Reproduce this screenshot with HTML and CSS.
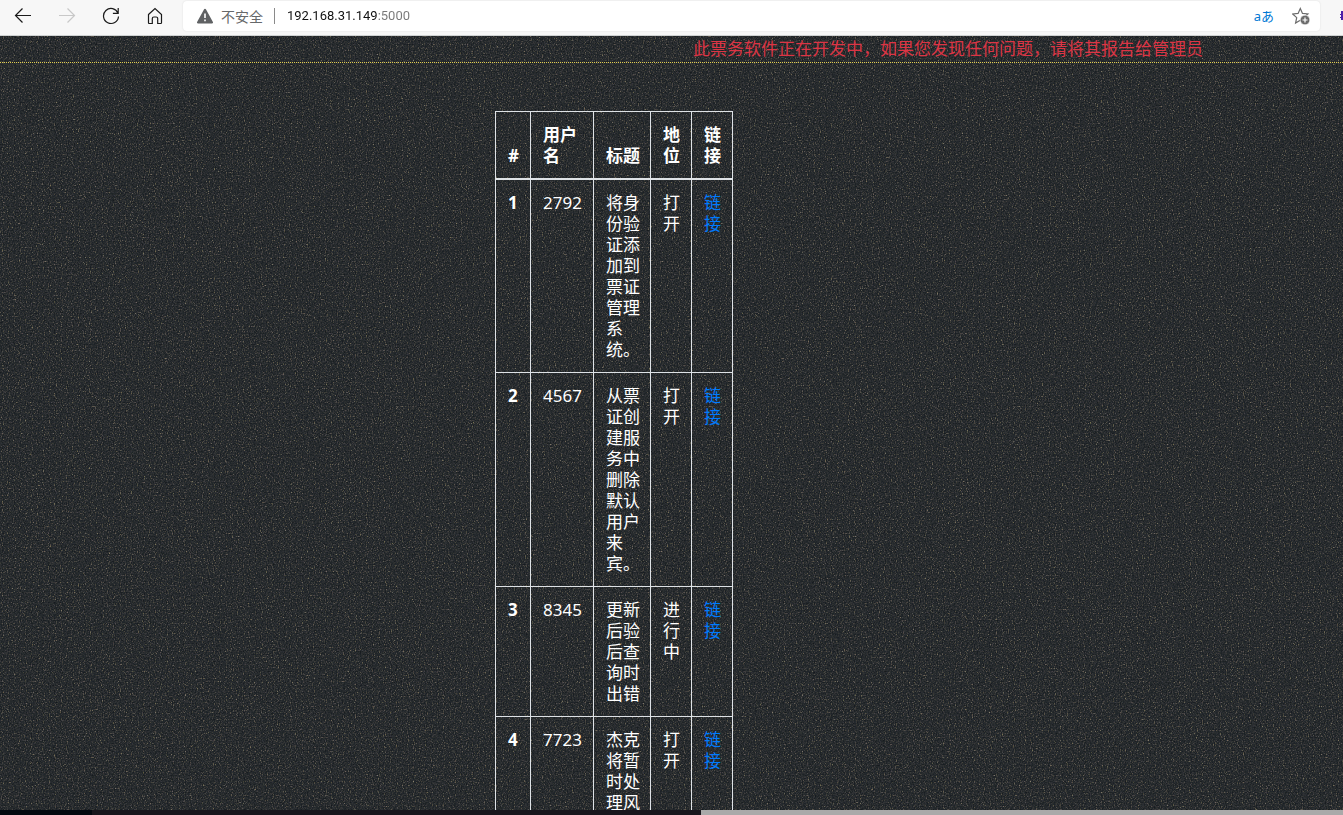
FILE: index.html
```html
<!DOCTYPE html>
<html lang="zh-CN">
<head>
<meta charset="utf-8">
<title>票务</title>
<link rel="stylesheet" href="styles.css">
</head>
<body>
<header class="toolbar">
  <nav class="nav">
    <button class="icon-btn" aria-label="后退"><svg viewBox="0 0 18 18"><path d="M17 8.5H1.5M8.5 1.5l-7 7 7 7"/></svg></button>
    <button class="icon-btn disabled" aria-label="前进" disabled><svg viewBox="0 0 18 18"><path d="M1 8.5h15.500M9.500 1.500l7 7-7 7"/></svg></button>
    <button class="icon-btn" aria-label="刷新"><svg viewBox="0 0 18 18"><path d="M16 6.200A7.500 7.500 0 1 0 16.500 9.500M16.200 1v5.300h-5.300"/></svg></button>
    <button class="icon-btn" aria-label="主页"><svg viewBox="0 0 18 18"><path d="M2.500 7.500L9 1.500l6.500 6v8.200a.8.8 0 0 1-.8.8h-3v-5a1.500 1.500 0 0 0-1.500-1.500H7.800a1.500 1.500 0 0 0-1.500 1.500v5h-3a.8.8 0 0 1-.8-.8z"/></svg></button>
  </nav>
  <form class="address">
    <svg class="warn" viewBox="0 0 16 16"><path d="M8 .8a1 1 0 0 1 .9.500l7 12.700a1 1 0 0 1-.9 1.500H1a1 1 0 0 1-.9-1.500l7-12.700A1 1 0 0 1 8 .8z" fill="#5f6163"/><path d="M8 5.500v4.500M8 11.500v1.700" stroke="#fff" stroke-width="1.600"/></svg>
    <label class="security" for="url">不安全</label>
    <span class="divider"></span>
    <input class="url" id="url" type="text" value="192.168.31.149:5000" spellcheck="false">
    <button type="button" class="translate" aria-label="翻译">aあ</button>
    <button type="button" class="icon-btn star" aria-label="收藏"><svg viewBox="0 0 18 18"><path d="M8.300 1.500l2.200 4.900 5.400.6-4 3.600 1.100 5.300-4.700-2.600-4.700 2.700 1.100-5.400-4-3.600 5.400-.6z"/><circle cx="13" cy="13" r="4.800" fill="#6b6b6b" stroke="#fff" stroke-width=".6"/><path d="M13 10.500v5M10.500 13h5" stroke="#fff"/></svg></button>
  </form>
  <svg class="extension" viewBox="0 0 4 12"><path d="M4 1v9H2V8H1V7h1V5H1V4h1V1z" fill="#4b1fa8"/></svg>
</header>
<main class="page">
  <svg class="texture" aria-hidden="true">
    <filter id="grain" x="0" y="0" width="100%" height="100%" color-interpolation-filters="sRGB">
      <feTurbulence type="fractalNoise" baseFrequency=".83 .71" numOctaves="2" seed="4"/>
      <feColorMatrix values=".9 .1 0 0 0  .85 .15 0 0 0  .75 .1 .15 0 0  0 0 0 0 1"/>
      <feComponentTransfer>
        <feFuncR type="table" tableValues=".07 .07 .09 .105 .125 .155 .2 .31 .46 .55 .6"/>
        <feFuncG type="table" tableValues=".08 .08 .1 .12 .145 .17 .21 .31 .45 .53 .57"/>
        <feFuncB type="table" tableValues=".09 .09 .11 .13 .155 .18 .22 .3 .41 .48 .5"/>
      </feComponentTransfer>
    </filter>
    <rect width="100%" height="100%" filter="url(#grain)"/>
  </svg>
  <p class="notice">此票务软件正在开发中，如果您发现任何问题，请将其报告给管理员</p>
  <table class="tickets">
    <colgroup><col class="c-id"><col class="c-user"><col class="c-title"><col class="c-small"><col class="c-small"></colgroup>
    <thead>
      <tr><th>#</th><th>用户名</th><th>标题</th><th>地位</th><th>链接</th></tr>
    </thead>
    <tbody>
      <tr><th>1</th><td>2792</td><td>将身份验证添加到票证管理系统。</td><td>打开</td><td><a href="#1">链接</a></td></tr>
      <tr><th>2</th><td>4567</td><td>从票证创建服务中删除默认用户来宾。</td><td>打开</td><td><a href="#2">链接</a></td></tr>
      <tr><th>3</th><td>8345</td><td>更新后验后查询时出错</td><td>进行中</td><td><a href="#3">链接</a></td></tr>
      <tr><th>4</th><td>7723</td><td>杰克将暂时处理风</td><td>打开</td><td><a href="#4">链接</a></td></tr>
    </tbody>
  </table>
</main>
<footer class="strip"><span class="strip-start"></span><span class="strip-mid"></span><span class="strip-end"></span></footer>
</body>
</html>
```
FILE: styles.css
```css
* { box-sizing: border-box; }
body {
  margin: 0;
  height: 100vh;
  display: flex;
  flex-direction: column;
  overflow: hidden;
  background: #25292b;
  color: #fff;
  font: 17px/21px "Noto Sans", "Noto Sans CJK SC", sans-serif;
}
button { border: 0; padding: 0; background: none; }

.toolbar {
  flex: none;
  display: flex;
  align-items: flex-start;
  height: 36px;
  padding-top: 1px;
  background: #f7f7f7;
  border-bottom: 1px solid #cfd2d2;
}
.nav {
  display: flex;
  gap: 26px;
  width: 183px;
  padding: 6px 0 0 14px;
}
.icon-btn { width: 18px; height: 18px; flex: none; }
.icon-btn svg {
  display: block;
  width: 18px;
  height: 18px;
  fill: none;
  stroke: #1a1a1a;
  stroke-width: 1.2;
}
.disabled svg { stroke: #c8c8c8; }
.address {
  flex: 1;
  display: flex;
  align-items: center;
  height: 30px;
  padding: 0 10px 0 14px;
  background: #fff;
  border-radius: 4px;
  box-shadow: 0 0 2px #dcdcdc;
}
.warn { width: 16px; height: 16px; margin-right: 8px; }
.security { font-size: 14px; color: #66686a; }
.divider { width: 1px; height: 16px; margin: 0 12px 0 11px; background: #8a8a8a; }
.url {
  flex: 1;
  min-width: 0;
  padding: 0;
  border: 0;
  outline: 0;
  font: 13px/20px Roboto, "Noto Sans", sans-serif;
  color: #1a1a1a;
  -webkit-text-fill-color: transparent;
  background: linear-gradient(90deg, #111 91px, #777 91px);
  -webkit-background-clip: text;
  background-clip: text;
}
.translate {
  margin-right: 18px;
  color: #0078d4;
  font: 13px/18px "Noto Sans", "Noto Sans CJK JP", sans-serif;
}
.star svg { stroke: #6b6b6b; }
.extension { width: 4px; height: 12px; margin: 9px 0 0 19px; }

.page { position: relative; flex: 1; min-height: 0; overflow: hidden; }
.texture { position: absolute; inset: 0; width: 100%; height: 100%; }
.notice {
  position: relative;
  margin: 0 0 48px;
  padding: 2px 0 3px 693px;
  border-bottom: 1px dotted #e0cc50;
  color: #dc3545;
  white-space: nowrap;
}
.tickets {
  position: relative;
  table-layout: fixed;
  width: 238px;
  margin-left: 495px;
  border-collapse: collapse;
}
.c-id { width: 35px; }
.c-user { width: 63px; }
.c-title { width: 57px; }
.c-small { width: 41px; }
.tickets th, .tickets td {
  padding: 12px 10px 12px 12px;
  border: 1px solid #dee2e6;
  text-align: left;
  vertical-align: top;
}
.tickets thead th { vertical-align: bottom; border-bottom-width: 2px; }
.tickets a { color: #007bff; text-decoration: none; }

.strip { flex: none; display: flex; height: 5px; }
.strip-start { width: 92px; background: #03090f; }
.strip-mid { width: 609px; background: #18161c; }
.strip-end { flex: 1; background: #a9a9a9; }
```
